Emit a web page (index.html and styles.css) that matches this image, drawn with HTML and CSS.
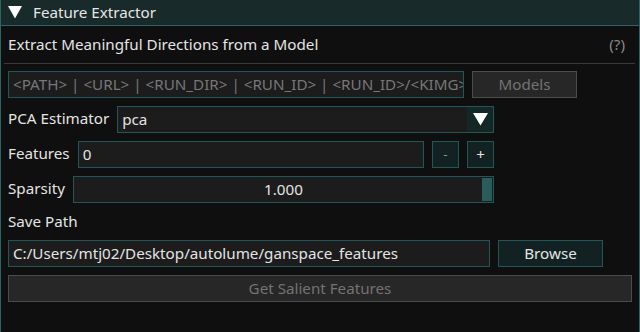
FILE: index.html
```html
<!DOCTYPE html>
<html>
<head>
<meta charset="utf-8">
<link rel="stylesheet" href="styles.css">
</head>
<body>
<div class="window">
  <div class="titlebar">
    <svg class="tri" width="14" height="13" viewBox="0 0 14 13"><polygon points="0,0 14,0 7,12.5" fill="#ffffff"/></svg>
    <span class="title">Feature Extractor</span>
  </div>
  <div class="content">
    <div class="header">
      <span>Extract Meaningful Directions from a Model</span>
      <span class="help">(?)</span>
    </div>
    <div class="separator"></div>
    <div class="row row-path">
      <div class="field grow"><span class="placeholder">&lt;PATH&gt; | &lt;URL&gt; | &lt;RUN_DIR&gt; | &lt;RUN_ID&gt; | &lt;RUN_ID&gt;/&lt;KIMG&gt;.pkl</span></div>
      <div class="btn disabled w105">Models</div>
    </div>
    <div class="row row-mid">
      <span class="label">PCA Estimator</span>
      <div class="field grow combo">
        <span class="val">pca</span>
        <span class="arrow"><svg width="15" height="13" viewBox="0 0 15 13"><polygon points="0,0 15,0 7.5,12.6" fill="#ffffff"/></svg></span>
      </div>
    </div>
    <div class="row row-mid">
      <span class="label">Features</span>
      <div class="field grow"><span class="val">0</span></div>
      <div class="btn sq minus">-</div>
      <div class="btn sq">+</div>
    </div>
    <div class="row row-mid">
      <span class="label">Sparsity</span>
      <div class="field grow slider">
        <span class="sval">1.000</span>
        <span class="grab"></span>
      </div>
    </div>
    <div class="label line">Save Path</div>
    <div class="row row-save">
      <div class="field grow"><span class="val">C:/Users/mtj02/Desktop/autolume/ganspace_features</span></div>
      <div class="btn w105">Browse</div>
    </div>
    <div class="row">
      <div class="btn disabled grow">Get Salient Features</div>
    </div>
  </div>
</div>
</body>
</html>
```

FILE: styles.css
```css
html, body {
  margin: 0;
  padding: 0;
  background: #0f0f0f;
}
body {
  font-family: "Noto Sans", "Open Sans", sans-serif;
  font-size: 15.2px;
  line-height: 21px;
  color: #e4e4e4;
  width: 640px;
  height: 332px;
  overflow: hidden;
}
.window {
  box-sizing: border-box;
  width: 640px;
  height: 332px;
  border-left: 1px solid #2b6464;
  border-right: 1px solid #2b6464;
  background: #0f0f0f;
}
.titlebar {
  height: 25px;
  background: #192a2a;
  border-bottom: 1px solid #2b6464;
  display: flex;
  align-items: center;
  padding-left: 7px;
}
.tri {
  display: block;
}
.title {
  margin-left: 11px;
  color: #e6e6e6;
}
.content {
  padding: 8px 7px 0 7px;
  display: flex;
  flex-direction: column;
  gap: 8px;
}
.header {
  display: flex;
  justify-content: space-between;
  height: 21px;
}
.help {
  color: #888888;
  margin-right: 7px;
}
.separator {
  height: 1px;
  background: #3a3a3a;
  margin: 0 -3px -1px -4px;
}
.row {
  display: flex;
  gap: 8px;
  height: 27px;
  align-items: stretch;
}
.row-path { width: 569px; }
.row-mid { width: 486px; }
.row-save { width: 595px; }
.grow { flex: 1; min-width: 0; }
.label {
  white-space: nowrap;
  padding-top: 2px;
}
.label.line { height: 21px; padding-top: 0; }
.field {
  box-sizing: border-box;
  background: #1c1c1c;
  border: 1px solid #235757;
  padding: 2px 4px 0 4px;
  overflow: hidden;
  white-space: nowrap;
  position: relative;
}
.placeholder { color: #777777; }
.val { color: #e4e4e4; }
.combo { padding-right: 0; }
.arrow {
  position: absolute;
  right: 0;
  top: 0;
  bottom: 0;
  width: 26px;
  background: #132727;
  display: flex;
  align-items: center;
  justify-content: center;
}
.arrow svg { display: block; margin-left: 1px; }
.slider { text-align: center; }
.sval { color: #e4e4e4; }
.grab {
  position: absolute;
  right: 1px;
  top: 1px;
  bottom: 1px;
  width: 10px;
  background: #2a5c5c;
}
.btn {
  box-sizing: border-box;
  background: #122222;
  border: 1px solid #235757;
  text-align: center;
  padding-top: 2px;
  white-space: nowrap;
  color: #e4e4e4;
}
.btn.disabled {
  background: #272727;
  border-color: #4c4c4c;
  color: #737373;
}
.w105 { width: 105px; }
.sq { width: 27px; }
.minus { color: #9a9a9a; font-size: 12px; }
```
